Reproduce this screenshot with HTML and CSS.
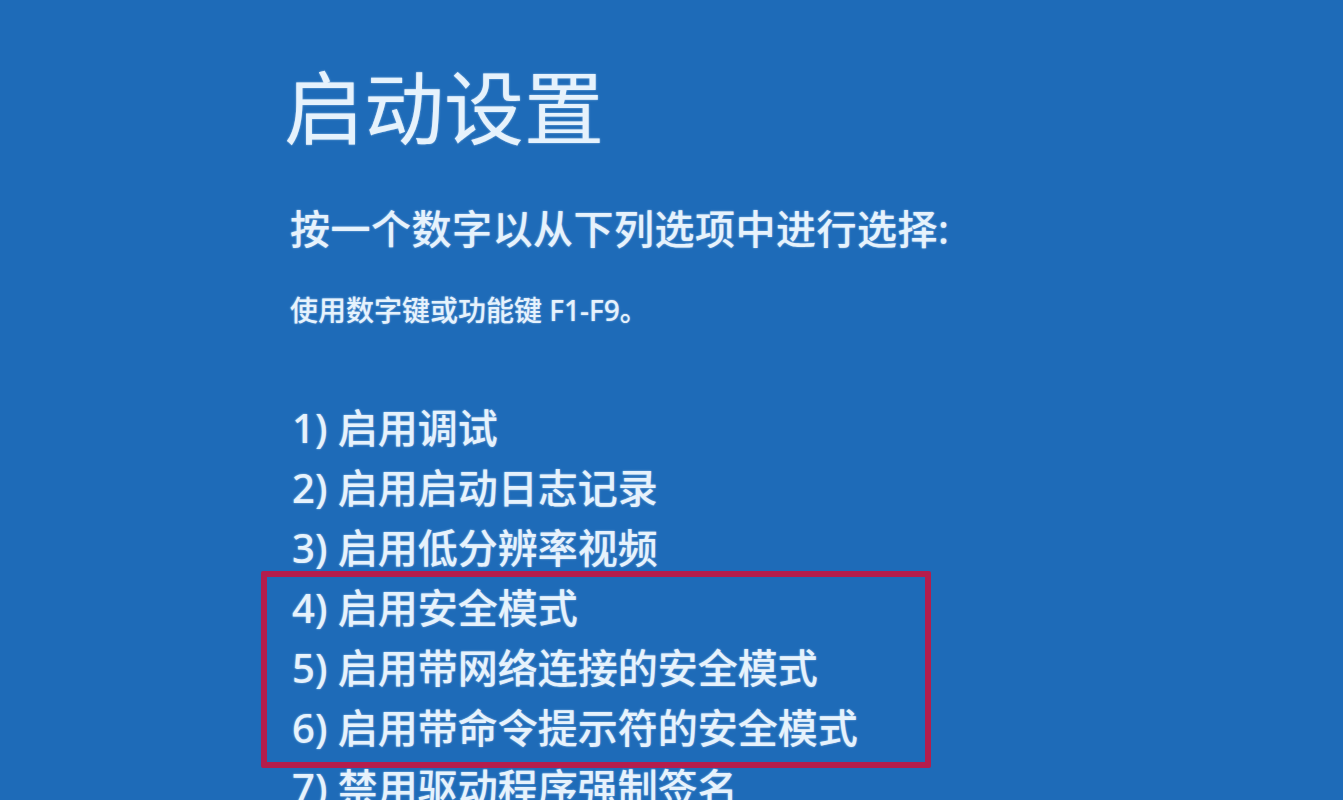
FILE: index.html
```html
<!DOCTYPE html>
<html lang="zh-CN">
<head>
<meta charset="utf-8">
<title>启动设置</title>
<link rel="stylesheet" href="styles.css">
</head>
<body>
<main class="screen">
  <h1 class="title">启动设置</h1>
  <p class="subtitle">按一个数字以从下列选项中进行选择:</p>
  <p class="hint">使用数字键或功能键 F1-F9。</p>
  <ul class="options">
    <li>1) 启用调试</li>
    <li>2) 启用启动日志记录</li>
    <li>3) 启用低分辨率视频</li>
    <li class="group">
      <ul class="options">
        <li>4) 启用安全模式</li>
        <li>5) 启用带网络连接的安全模式</li>
        <li>6) 启用带命令提示符的安全模式</li>
      </ul>
    </li>
    <li>7) 禁用驱动程序强制签名</li>
  </ul>
</main>
</body>
</html>
```

FILE: styles.css
```css
html, body {
  margin: 0;
  padding: 0;
  height: 100%;
  overflow: hidden;
  background: #1e6bb8;
}

.screen {
  box-sizing: border-box;
  height: 800px;
  padding: 57px 0 0 288px;
  color: #e6f2fc;
  font-family: "Noto Sans", "Noto Sans CJK SC", sans-serif;
  font-weight: 500;
  text-shadow: 0 0 2px rgba(210, 232, 255, 0.7);
}

.title {
  margin: 0 0 0 -4px;
  font-size: 80px;
  line-height: 100px;
  font-weight: 400;
  letter-spacing: 0;
}

.subtitle {
  margin: 42px 0 0 2px;
  font-size: 40px;
  line-height: 60px;
  letter-spacing: 0.5px;
}

.hint {
  margin: 31px 0 0 2px;
  font-size: 28px;
  line-height: 40px;
}

.options {
  list-style: none;
  margin: 0;
  padding: 0;
  font-size: 40px;
  line-height: 60px;
  white-space: nowrap;
}

.screen > .options {
  margin: 68px 0 0 4px;
}

.group {
  position: relative;
}

.group::before {
  content: "";
  position: absolute;
  top: -7px;
  bottom: -10px;
  left: -31px;
  width: 658px;
  border: 6px solid #b41d4c;
  border-radius: 2px;
  pointer-events: none;
}
```
